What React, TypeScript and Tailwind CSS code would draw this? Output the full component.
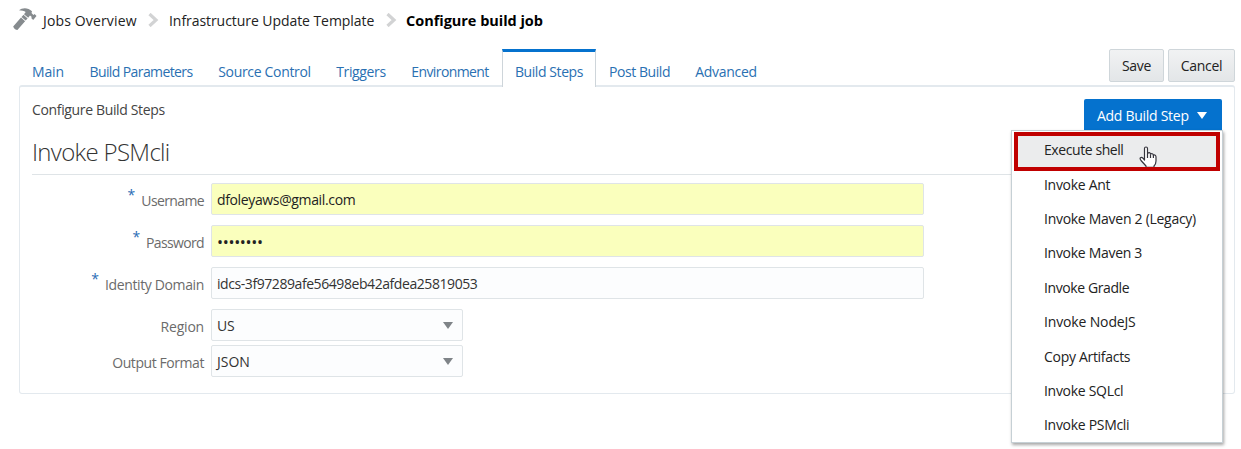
import React from "react";

const tabs = [
  { label: "Main", cls: "w-[58px] tracking-[-0.1px]" },
  { label: "Build Parameters", cls: "w-[128px] tracking-[-0.6px]" },
  { label: "Source Control", cls: "w-[119px] tracking-[-0.32px]" },
  { label: "Triggers", cls: "w-[74px] tracking-[-0.35px]" },
  { label: "Environment", cls: "w-[104px] tracking-[-0.6px]" },
  { label: "Build Steps", cls: "w-[94px] tracking-[-0.42px]", active: true },
  { label: "Post Build", cls: "w-[87px] tracking-[-0.42px]" },
  { label: "Advanced", cls: "w-[86px] tracking-[-0.3px]" },
];

const steps = [
  { label: "Invoke Ant", cls: "tracking-[-0.3px]" },
  { label: "Invoke Maven 2 (Legacy)", cls: "tracking-[-0.28px]" },
  { label: "Invoke Maven 3", cls: "tracking-[-0.3px]" },
  { label: "Invoke Gradle", cls: "tracking-[-0.4px]" },
  { label: "Invoke NodeJS", cls: "tracking-[-0.15px]" },
  { label: "Copy Artifacts", cls: "tracking-[-0.3px]" },
  { label: "Invoke SQLcl", cls: "tracking-[-0.3px]" },
  { label: "Invoke PSMcli", cls: "tracking-[-0.3px]" },
];

function Hammer() {
  return (
    <svg className="mt-[7px] h-6 w-6 shrink-0" viewBox="0 0 24 24" fill="#868b8e">
      <path d="M6 3.200C9 .6 15 .1 19 4.200L18.500 6 20.400 7.900 21.600 7 23.500 9 20.200 13 18.400 11.200 18.600 9.700 17 8.500 15.200 10.800 11 7.200 12.700 5.100C11.200 3.700 8.500 3.300 6 3.200Z" />
      <path d="M10.500 7.800 14.600 11.500 12.600 13.600 8.500 10.100ZM8 10.600 12.100 14.200 4.400 23C2.600 23 .6 21.300 .2 19.500Z" />
    </svg>
  );
}

function Chevron() {
  return (
    <svg className="h-3.5 w-3 shrink-0" viewBox="0 0 12 14" fill="none" stroke="#d2d3d4" strokeWidth="3.200">
      <path d="M1.500 1 8 7 1.500 13" />
    </svg>
  );
}

function Triangle({ className }: { className: string }) {
  return (
    <svg className={className} viewBox="0 0 10 7" fill="currentColor">
      <path d="M0 0H10L5 7Z" />
    </svg>
  );
}

function Hand() {
  return (
    <svg className="h-[22px] w-[18px]" viewBox="0 0 18 22" fill="#fff" stroke="#35353d" strokeWidth="1.200" strokeLinejoin="round">
      <path d="M5.500 14V2.500Q5.500 1 7 1T8.500 2.500V8Q9 6.500 10.300 6.700 11.500 7 11.500 8.200 12.500 7.200 13.700 7.900 14.400 8.300 14.400 9.200 15.500 8.600 16.400 9.400 17 10 17 11V15Q17 18 15 20V21.400H7V20L2 14.500Q.5 12.500 1.500 11.700 2.700 11 4 12.200Z" />
      <path d="M8.500 8V12M11.500 8.500V12M14.400 9V12" fill="none" />
    </svg>
  );
}

function Field({
  label,
  value,
  required,
  filled,
  select,
  gap,
  labelCls,
  valueCls,
}: {
  label: string;
  value: string;
  required?: boolean;
  filled?: boolean;
  select?: boolean;
  gap: string;
  labelCls: string;
  valueCls: string;
}) {
  return (
    <div className={`flex h-8 ${gap}`}>
      <label className={`flex w-[184px] items-center justify-end pt-[3px] text-[#6b6b6b] ${labelCls}`}>
        {required && <span className="mr-[6px] -mt-[11px] text-[14px] tracking-normal text-[#2a6cb5]">*</span>}
        {label}
      </label>
      <div
        className={`ml-[7px] flex items-center justify-between rounded-[2px] border border-[#dfe4e7] pl-[5px] ${
          select ? "w-[252px] pr-[9px]" : "w-[713px]"
        } ${filled ? "bg-[#faffbd] text-[#222]" : "bg-[#fcfdfe] text-[#333]"}`}
      >
        <span className={`pt-[2px] ${valueCls}`}>{value}</span>
        {select && <Triangle className="h-[7px] w-[10px] text-[#7f8488]" />}
      </div>
    </div>
  );
}

export default function App() {
  return (
    <div className="h-[449px] w-[1241px] overflow-hidden bg-white font-['Open_Sans','Noto_Sans',sans-serif] text-[14px] leading-5 whitespace-nowrap text-[#222]">
      <nav className="flex h-[49px] items-start pl-[13px]">
        <Hammer />
        <div className="flex h-10 items-center">
          <span className="ml-[6px] w-[105px] pt-px tracking-[0.15px]">Jobs Overview</span>
          <Chevron />
          <span className="ml-[9px] w-[217px] pt-px tracking-[-0.06px]">Infrastructure Update Template</span>
          <Chevron />
          <span className="ml-[8px] pt-px text-[14.500px] font-bold tracking-[-0.03px] text-black">Configure build job</span>
        </div>
      </nav>

      <div className="flex h-9 justify-between pr-[6px] pl-[19px]">
        <div className="flex">
          {tabs.map((t) => (
            <div
              key={t.label}
              className={`flex justify-center text-[#2a70b2] ${t.cls} ${
                t.active
                  ? "relative z-10 h-[38px] border-x border-t-[3px] border-x-[#ced5da] border-t-[#0572ce] bg-white pt-[10px]"
                  : "h-9 pt-[13px]"
              }`}
            >
              {t.label}
            </div>
          ))}
        </div>
        <div className="flex gap-1">
          <button className="h-[33px] w-[55px] rounded-[2px] border border-[#cfd6da] bg-linear-to-b from-[#f1f2f3] to-[#e3e6e8] pt-px tracking-[-0.3px]">Save</button>
          <button className="h-[33px] w-[67px] rounded-[2px] border border-[#cfd6da] bg-linear-to-b from-[#f1f2f3] to-[#e3e6e8] pt-px tracking-[-0.3px]">Cancel</button>
        </div>
      </div>

      <main className="ml-[19px] h-[309px] w-[1216px] rounded-[3px] border border-t-2 border-[#e3e9ee]">
        <div className="flex h-[43px] items-end justify-between pr-3 pl-3">
          <span className="mb-[10px] tracking-[-0.35px] text-[#444]">Configure Build Steps</span>
          <div className="relative">
            <button className="flex h-[31px] w-[138px] items-center rounded-t-[2px] bg-[#0572ce] pt-[2px] pl-[13px] text-white">
              <span className="w-[100px] text-left tracking-[-0.28px]">Add Build Step</span>
              <Triangle className="h-[7px] w-[10px]" />
            </button>
            <ul className="absolute top-[31px] right-[-1px] z-20 w-[212px] border border-[#c6d0d5] bg-white pt-[1px] shadow-[1px_2px_3px_rgba(0,0,0,0.35)]">
              <li className="relative mx-[2px] flex h-[39px] items-center border-4 border-[#c00000] bg-[#ebeced] pb-[3px] pl-[26px] tracking-[-0.42px]">
                Execute shell
                <span className="absolute top-[10px] left-[121px] h-[21px] overflow-hidden">
                  <Hand />
                </span>
              </li>
              {steps.map((s) => (
                <li key={s.label} className={`relative -top-[4px] -mb-px flex h-[35.400px] items-center pl-8 last:-mb-[5px] ${s.cls}`}>
                  {s.label}
                </li>
              ))}
            </ul>
          </div>
        </div>
        <h1 className="mx-3 h-[45px] border-b border-[#dfe4e7] pt-[6px] text-[24px] leading-8 font-light tracking-[-0.68px] text-[#333]">
          Invoke PSMcli
        </h1>
        <Field gap="mt-2" label="Username" labelCls="tracking-[-0.62px]" required filled value="dfoleyaws@gmail.com" valueCls="tracking-[-0.36px]" />
        <Field gap="mt-[10px]" label="Password" labelCls="tracking-[-0.65px]" required filled value="••••••••" valueCls="text-[16px] tracking-[-0.3px]" />
        <Field gap="mt-[10px]" label="Identity Domain" labelCls="tracking-[-0.37px]" required value="idcs-3f97289afe56498eb42afdea25819053" valueCls="tracking-[-0.43px]" />
        <Field gap="mt-[10px]" label="Region" labelCls="tracking-[-0.2px]" select value="US" valueCls="tracking-[-0.1px]" />
        <Field gap="mt-1" label="Output Format" labelCls="tracking-[-0.43px]" select value="JSON" valueCls="tracking-normal" />
      </main>
    </div>
  );
}
